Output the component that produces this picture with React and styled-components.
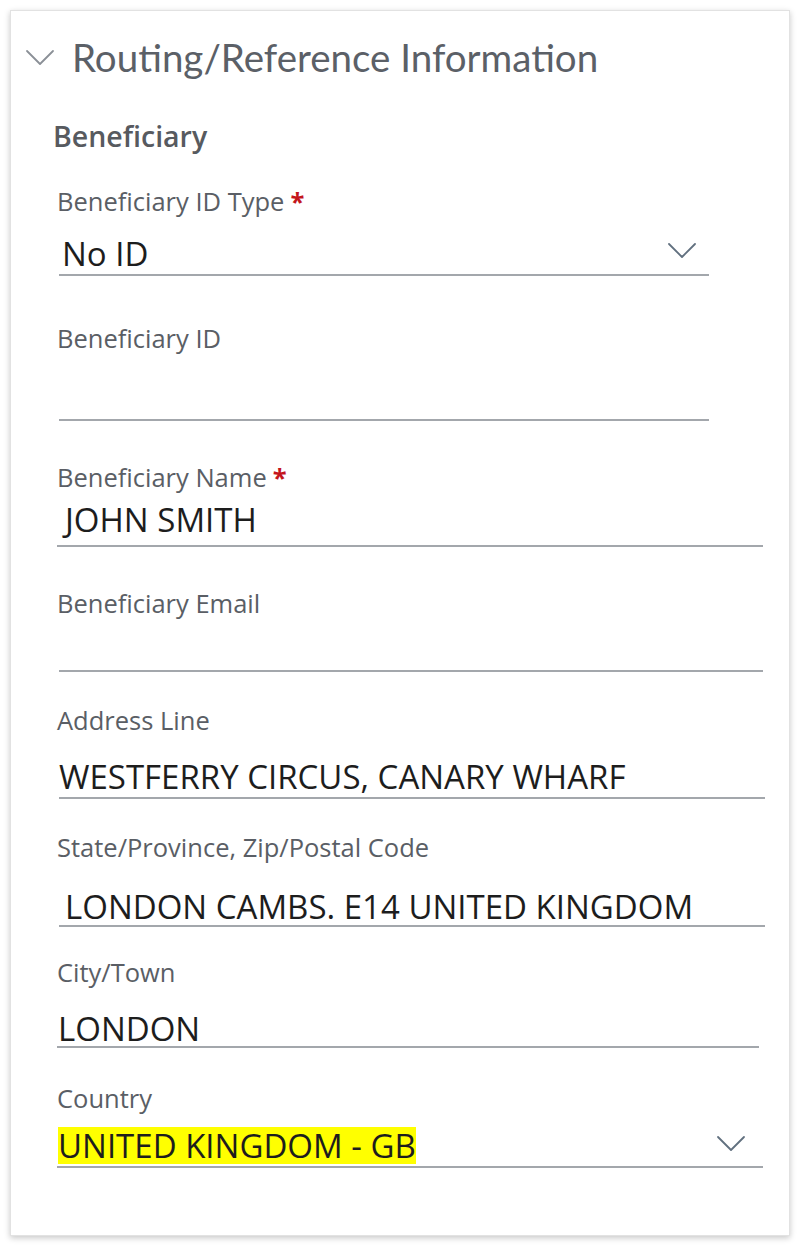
import React from 'react';
import styled, { createGlobalStyle } from 'styled-components';

const GlobalStyle = createGlobalStyle`
  html, body {
    margin: 0;
    padding: 0;
    background: #ffffff;
  }
  body {
    font-family: "Open Sans", "Noto Sans", Arial, sans-serif;
  }
`;

const Page = styled.div`
  padding: 10px;
  width: 800px;
  box-sizing: border-box;
`;

const Card = styled.section`
  background: #fff;
  height: 1226px;
  box-sizing: border-box;
  border: 1px solid #e2e2e2;
  box-shadow: 0 2px 6px rgba(0, 0, 0, 0.22);
  display: flex;
  flex-direction: column;
`;

const Header = styled.div`
  display: flex;
  align-items: center;
  height: 92px;
  padding-left: 14px;
  gap: 17px;
`;

const Chevron = styled.svg`
  flex: none;
  display: block;
`;

const Title = styled.h2`
  margin: 0;
  font-family: Lato, "Open Sans", sans-serif;
  font-weight: 400;
  font-size: 38.5px;
  color: #5b6067;
`;

const Body = styled.div`
  padding: 0 0 0 48px;
  display: flex;
  flex-direction: column;
`;

const SectionTitle = styled.h3`
  margin: 13px 0 0 -6px;
  font-size: 28.5px;
  font-weight: 600;
  color: #575a5f;
  line-height: 40px;
`;

const Field = styled.div`
  display: flex;
  flex-direction: column;
  margin-top: ${p => p.$mt}px;
  margin-left: ${p => p.$left}px;
  width: ${p => p.$width}px;
`;

const Label = styled.label`
  font-size: 25.5px;
  line-height: 30px;
  color: #5a5e65;
  margin-left: ${p => -2 - p.$left}px;
`;

const Required = styled.span`
  color: #c4161c;
  font-weight: 700;
  margin-left: 6px;
`;

const ValueBox = styled.div`
  height: ${p => p.$box}px;
  box-sizing: border-box;
  border-bottom: 2px solid #a3a7ac;
  display: flex;
  align-items: flex-end;
  justify-content: space-between;
  padding-bottom: ${p => p.$pb}px;
  padding-left: ${p => p.$indent}px;
`;

const Value = styled.span`
  font-size: 33px;
  line-height: 34px;
  color: #1d1d1d;
  white-space: nowrap;
  background: ${p => (p.$highlight ? '#ffff00' : 'transparent')};
  padding: ${p => (p.$highlight ? '2px 0 1px' : '0')};
`;

const SelectArrow = styled(Chevron)`
  margin-right: ${p => p.$right}px;
  margin-bottom: 12px;
`;

const fields = [
  { label: 'Beneficiary ID Type', required: true, value: 'No ID', select: true, mt: 30, left: 0, width: 650, box: 60, pb: 3, indent: 3, arrowRight: 12 },
  { label: 'Beneficiary ID', mt: 47, left: 0, width: 650, box: 68 },
  { label: 'Beneficiary Name', required: true, value: 'JOHN SMITH', mt: 41, left: -2, width: 706, box: 55, pb: 8, indent: 8 },
  { label: 'Beneficiary Email', mt: 41, left: 0, width: 704, box: 54 },
  { label: 'Address Line', value: 'WESTFERRY CIRCUS, CANARY WHARF', mt: 33, left: 0, width: 706, box: 64, pb: 3, indent: 0 },
  { label: 'State/Province, Zip/Postal Code', value: 'LONDON CAMBS. E14 UNITED KINGDOM', mt: 33, left: 0, width: 706, box: 65, pb: 1, indent: 6 },
  { label: 'City/Town', value: 'LONDON', mt: 30, left: -2, width: 702, box: 61, pb: 0, indent: 1 },
  { label: 'Country', value: 'UNITED KINGDOM - GB', select: true, highlight: true, mt: 35, left: -2, width: 706, box: 55, pb: 2, indent: 1, arrowRight: 17 }
];

const ChevronIcon = ({ as: Comp = Chevron, color, ...rest }) => (
  <Comp width="30" height="17" viewBox="0 0 30 17" fill="none" {...rest}>
    <path d="M2 2 L15 15 L28 2" stroke={color} strokeWidth="1.8" strokeLinecap="round" strokeLinejoin="round" />
  </Comp>
);

const FormField = ({ f }) => (
  <Field $mt={f.mt} $left={f.left} $width={f.width}>
    <Label $left={f.left}>
      {f.label}
      {f.required && <Required>*</Required>}
    </Label>
    <ValueBox $box={f.box} $pb={f.pb || 0} $indent={f.indent || 0}>
      {f.value ? <Value $highlight={f.highlight}>{f.value}</Value> : <span />}
      {f.select && <ChevronIcon as={SelectArrow} $right={f.arrowRight} color="#61707f" />}
    </ValueBox>
  </Field>
);

export default function App() {
  return (
    <Page>
      <GlobalStyle />
      <Card>
        <Header>
          <ChevronIcon color="#8b9097" />
          <Title>Routing/Reference Information</Title>
        </Header>
        <Body>
          <SectionTitle>Beneficiary</SectionTitle>
          {fields.map(f => (
            <FormField key={f.label} f={f} />
          ))}
        </Body>
      </Card>
    </Page>
  );
}
